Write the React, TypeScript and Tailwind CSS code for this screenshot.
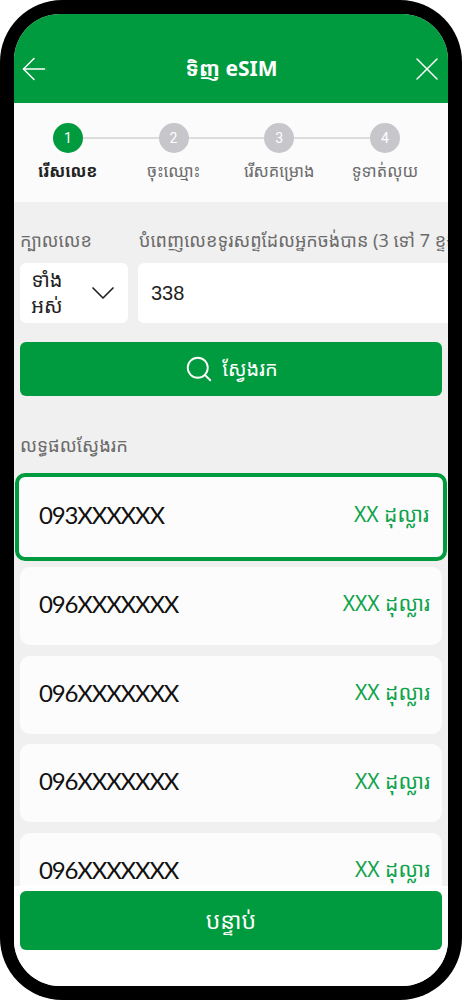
import { ArrowLeft, ChevronDown, Search, X } from "lucide-react";

const khmer = "font-['Noto_Sans','Noto_Sans_Khmer','Khmer_OS',sans-serif]";

const steps = [
  { n: 1, label: "រើសលេខ", active: true },
  { n: 2, label: "ចុះឈ្មោះ", active: false },
  { n: 3, label: "រើសគម្រោង", active: false },
  { n: 4, label: "ទូទាត់លុយ", active: false },
];

const results = [
  { number: "093XXXXXX", price: "XX ដុល្លារ", selected: true },
  { number: "096XXXXXXX", price: "XXX ដុល្លារ", selected: false },
  { number: "096XXXXXXX", price: "XX ដុល្លារ", selected: false },
  { number: "096XXXXXXX", price: "XX ដុល្លារ", selected: false },
  { number: "096XXXXXXX", price: "XX ដុល្លារ", selected: false },
];

const Stepper = () => (
  <div className="flex h-[99px] shrink-0 bg-[#fbfbfb] pl-[1px] pt-[20px]">
    {steps.map((step, idx) => (
      <div key={step.n} className="relative flex w-[105.7px] shrink-0 flex-col items-center">
        {idx < steps.length - 1 && (
          <div className="absolute left-[52px] top-[14px] h-[1.5px] w-[106px] bg-[#dcdcdc]" />
        )}
        <div
          className={`relative z-10 flex h-[30px] w-[30px] items-center justify-center rounded-full font-['Roboto',sans-serif] text-[14px] text-white ${
            step.active ? "bg-[#009b3e]" : "bg-[#c6c6cb]"
          }`}>
          {step.n}
        </div>
        <span
          className={`mt-[6px] whitespace-nowrap text-[16.5px] leading-[24px] ${
            step.active ? "font-bold text-[#222222]" : "text-[#6b6b6b]"
          }`}>
          {step.label}
        </span>
      </div>
    ))}
  </div>
);

const ResultRow = ({ number, price, selected }: (typeof results)[number]) => (
  <div
    className={`flex shrink-0 items-center justify-between rounded-[10px] bg-[#fcfcfc] ${
      selected
        ? "mx-[-5px] h-[88px] border-[4px] border-[#009b3e] pb-[5px] pl-[20px] pr-[14px]"
        : "h-[78px] pb-[4px] pl-[19px] pr-[12px]"
    }`}>
    <span className="font-['Lato',sans-serif] text-[24px] tracking-[-1.15px] text-[#111111]">{number}</span>
    <span className="text-[21px] text-[#0ea34a]">{price}</span>
  </div>
);

export default function App() {
  return (
    <div className={`h-[1000px] w-[462px] overflow-hidden bg-white ${khmer}`}>
      <div className="h-full w-full rounded-[62px] bg-black p-[14px]">
        <div className="flex h-[972px] w-[434px] flex-col overflow-hidden rounded-[46px] bg-[#f0f0f0]">
          <header className="flex h-[89px] shrink-0 items-center justify-between bg-[#009b3e] pl-[2px] pr-[1px] pt-[21px] text-white">
            <ArrowLeft size={36} strokeWidth={1} />
            <h1 className="ml-[4px] text-[21px] font-bold">ទិញ eSIM</h1>
            <X size={40} strokeWidth={0.9} />
          </header>

          <Stepper />

          <div className="flex min-h-0 flex-1 flex-col overflow-hidden px-[6px]">
            <div className="mt-[26px] flex gap-[11px] whitespace-nowrap text-[18px] leading-[24px] text-[#6b6b6b]">
              <span className="w-[108px] shrink-0">ក្បាលលេខ</span>
              <span>បំពេញលេខទូរសព្ទដែលអ្នកចង់បាន (3 ទៅ 7 ខ្ទង់)</span>
            </div>

            <div className="mt-[11px] flex gap-[10px]">
              <div className="flex h-[60px] w-[108px] shrink-0 items-center rounded-[6px] bg-white pl-[8px] pr-[5px]">
                <span className="w-[38px] text-center text-[20px] leading-[26px] text-[#222222]">ទាំងអស់</span>
                <ChevronDown size={40} strokeWidth={1} className="ml-auto text-[#222222]" />
              </div>
              <div className="-mr-[6px] flex h-[60px] flex-1 items-center rounded-l-[6px] bg-white pl-[13px] font-['Liberation_Sans',sans-serif] text-[20px] text-[#222222]">
                338
              </div>
            </div>

            <button className="mt-[19px] flex h-[54px] shrink-0 items-center justify-center gap-[8px] rounded-[6px] bg-[#009b3e] text-[20px] text-white">
              <Search size={30} strokeWidth={1.5} />
              ស្វែងរក
            </button>

            <div className="mt-[36px] text-[18.4px] leading-[26px] text-[#6b6b6b]">លទ្ធផលស្វែងរក</div>

            <div className="mt-[15px] flex flex-col gap-[10.7px]">
              {results.map((result, idx) => (
                <div key={idx} className={result.selected ? "-mb-[4.7px]" : ""}>
                  <ResultRow {...result} />
                </div>
              ))}
            </div>
          </div>

          <footer className="h-[100px] shrink-0 bg-white px-[6px] pt-[5px]">
            <button className="flex h-[59px] w-full items-center justify-center rounded-[6px] bg-[#009b3e] text-[23px] text-white">
              បន្ទាប់
            </button>
          </footer>
        </div>
      </div>
    </div>
  );
}
